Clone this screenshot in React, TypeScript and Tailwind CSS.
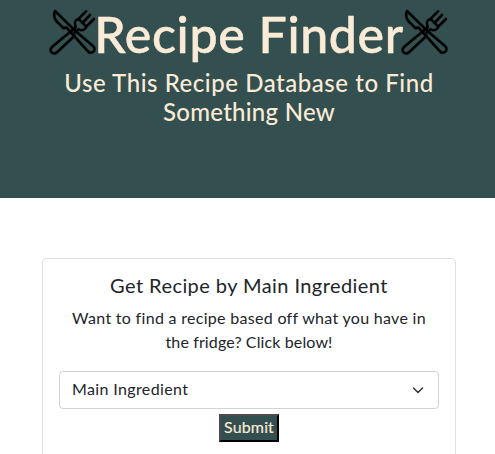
import React from "react";

function Utensils() {
  return (
    <svg
      className="mt-[7px] h-[50px] w-[50px] shrink-0"
      viewBox="0 0 150 150"
      fill="none"
      stroke="#000"
      strokeWidth="8"
      strokeLinecap="round"
      strokeLinejoin="round"
    >
      <path d="M21 12C17 22 18 33 25 42L47 64L55 61L120 133C125 139 132 138 136 134C141 129 140 122 135 117L78 68L21 12Z" />
      <path d="M66 75L11 121C7 126 7 132 11 136C16 141 23 140 28 135L80 86" />
      <path d="M114 13L92 35C85 37 79 44 81 53L83 60L71 71M138 36L115 59C113 66 105 71 97 69L90 67L80 77M126 24L105 46M92 36L114 58" />
    </svg>
  );
}

export default function App() {
  return (
    <div className="h-[454px] overflow-hidden bg-white font-['Lato',sans-serif] text-[#212529]">
      <header className="h-[198px] bg-[#344f4f] text-center text-[#faebd7]">
        <div className="flex h-[69px] items-start justify-center pl-[3px]">
          <Utensils />
          <h1 className="flex w-[302px] justify-center whitespace-nowrap pt-[4px] text-[50px] font-medium leading-[60px] [-webkit-text-stroke:0.5px_#faebd7]">
            <span className="tracking-[0.650px]">Recipe Finder</span>
          </h1>
          <Utensils />
        </div>
        <h2 className="flex flex-col items-center whitespace-nowrap pl-[3px] text-[24px] font-medium leading-[28.800px]">
          <span className="tracking-[0.550px]">Use This Recipe Database to Find</span>
          <span className="tracking-[0.250px]">Something New</span>
        </h2>
      </header>
      <main className="px-[42px] pt-[60px] pr-[39px]">
        <section className="h-[220px] rounded-[4px] border border-[#dfdfdf] px-4 pt-[14px] text-center">
          <h5 className="whitespace-nowrap text-[20px] leading-[24px] tracking-[0.430px]">Get Recipe by Main Ingredient</h5>
          <p className="mt-[9px] flex flex-col items-center whitespace-nowrap text-[16px] leading-[24px]">
            <span className="tracking-[0.300px]">Want to find a recipe based off what you have in</span>
            <span className="tracking-[0.120px]">the fridge? Click below!</span>
          </p>
          <button className="mt-[17px] flex h-[38px] w-full items-center justify-between rounded-[4px] border border-[#ced4da] pb-[2px] pl-3 pr-[12px] text-[16px] leading-[24px]">
            <span className="tracking-[0.370px]">Main Ingredient</span>
            <svg className="mt-px h-4 w-4" viewBox="0 0 16 16" fill="none" stroke="#343a40" strokeWidth="1.600" strokeLinecap="round" strokeLinejoin="round">
              <path d="m3.500 6 4.500 4.500L12.500 6" />
            </svg>
          </button>
          <button className="mx-auto mt-[5px] flex h-[28px] w-[60px] items-center justify-center border-2 border-b-black border-l-[#4c4c4c] border-r-black border-t-[#4c4c4c] bg-[#344f4f] pb-[2px] text-[16px] leading-[24px] text-[#faebd7] [-webkit-text-stroke:0.15px_#faebd7]">
            <span className="tracking-[0.150px]">Submit</span>
          </button>
        </section>
      </main>
    </div>
  );
}
